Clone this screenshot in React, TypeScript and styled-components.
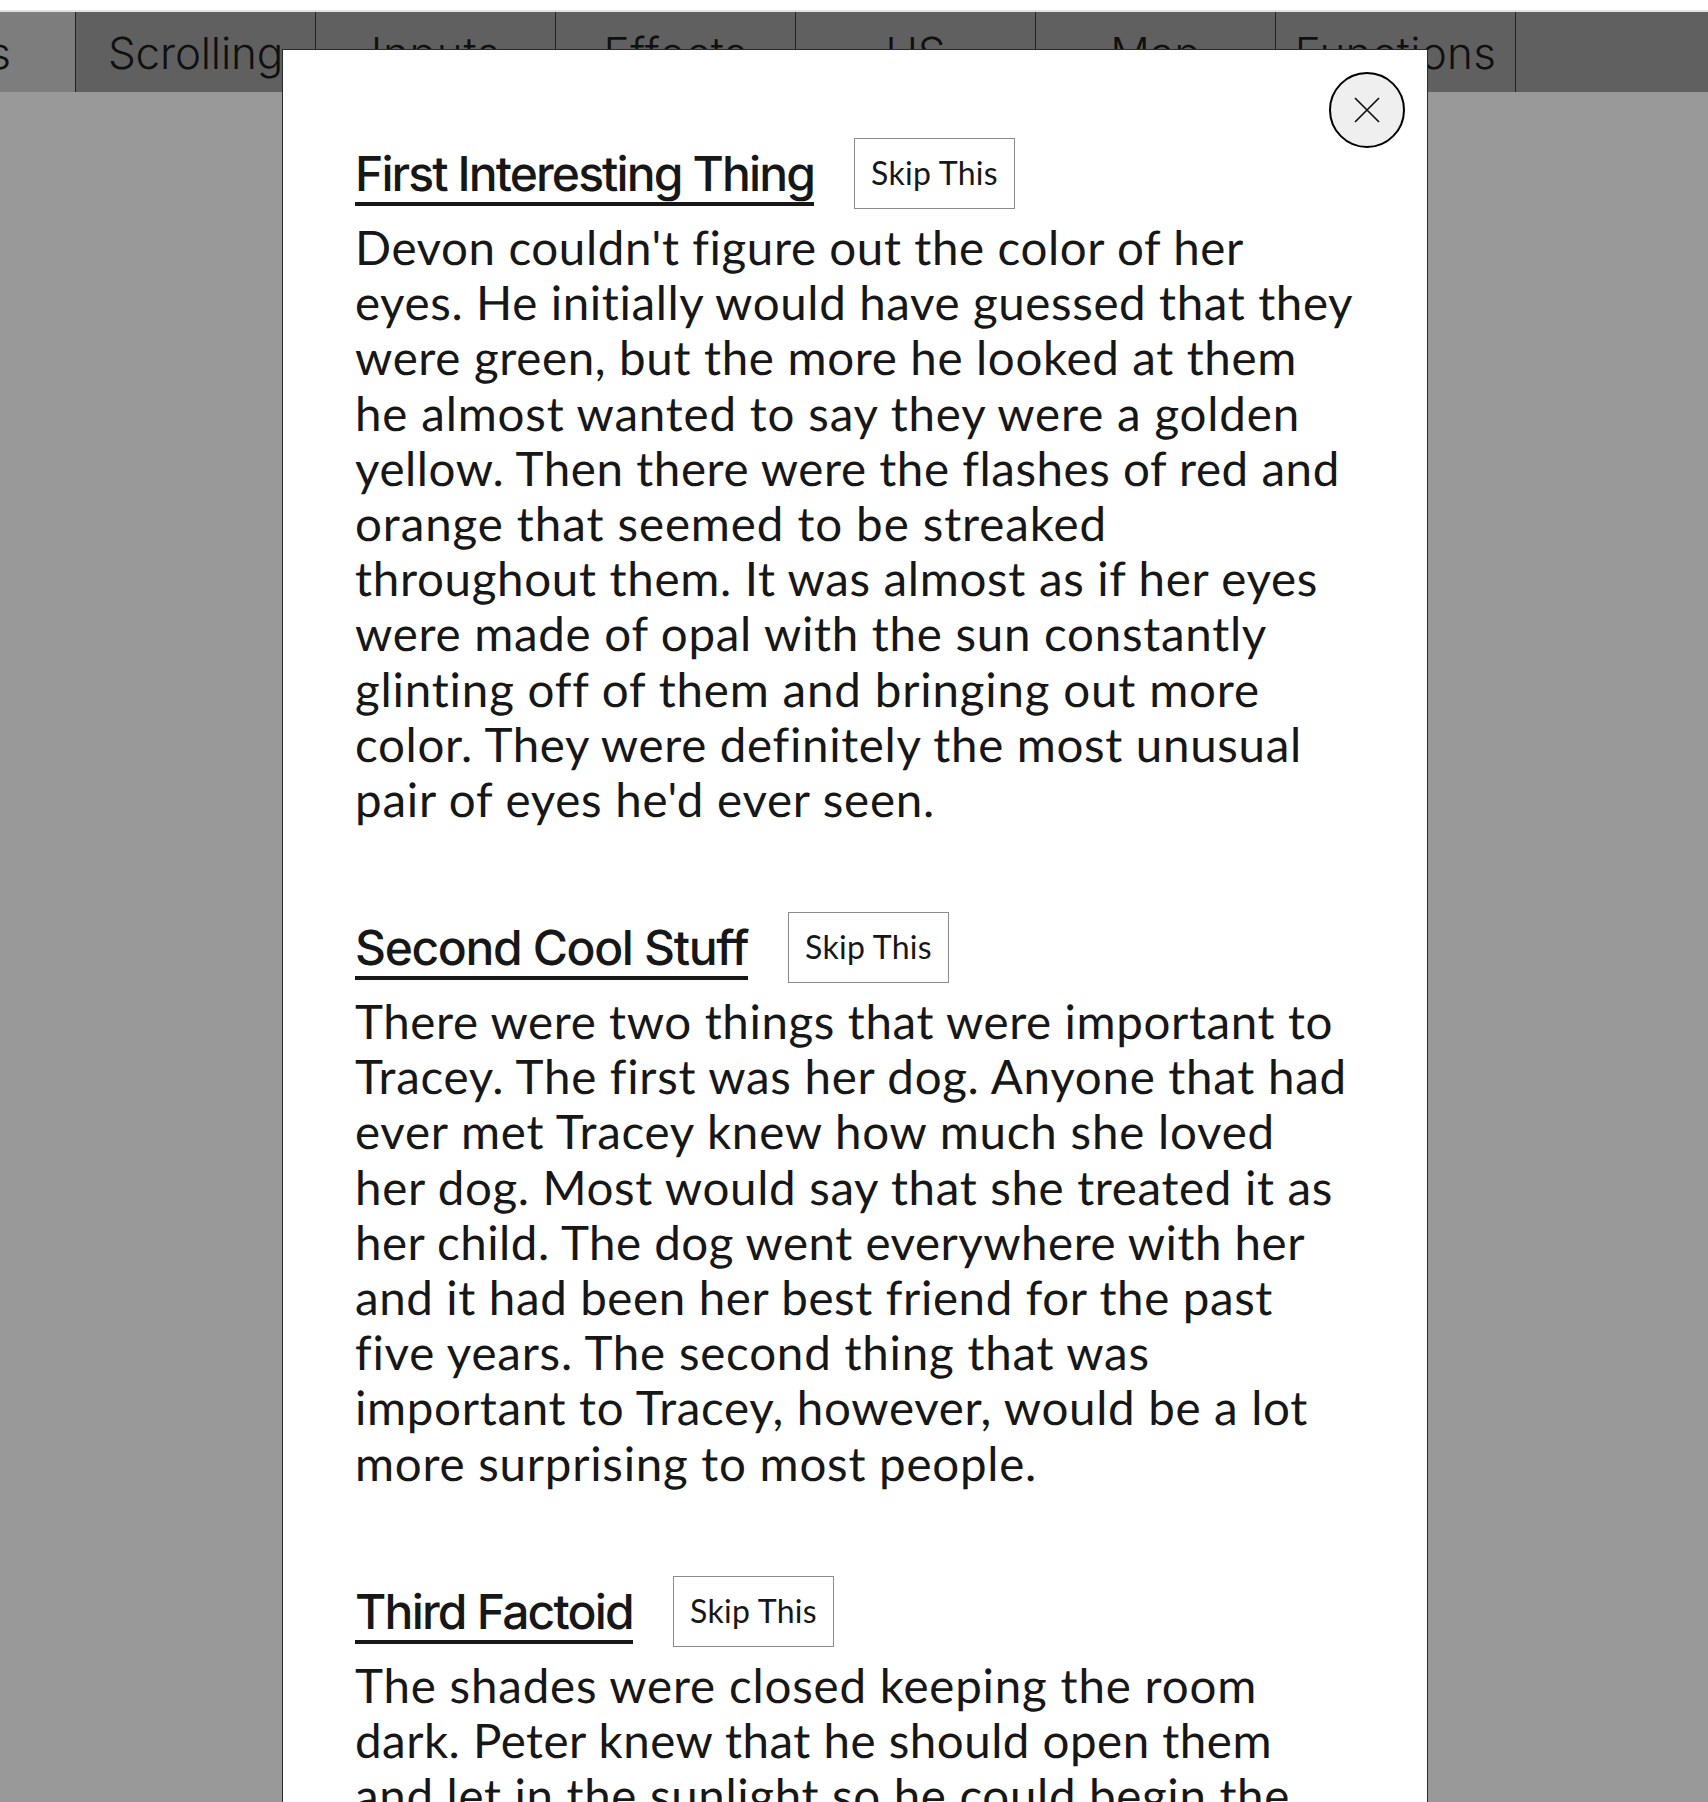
import React, { useLayoutEffect, useRef, useState } from 'react';
import styled, { createGlobalStyle } from 'styled-components';

const GlobalStyle = createGlobalStyle`
  *, *::before, *::after { box-sizing: border-box; }
  html, body { margin: 0; background: #999999; }
  body { height: 1802px; overflow: hidden; font-family: Lato, "Liberation Sans", sans-serif; color: #171717; text-rendering: geometricPrecision; }
`;

const Page = styled.div`
  position: relative;
  height: 1802px;
  overflow: hidden;
  background: #999999;
`;

const BrowserEdge = styled.div`
  height: 12px;
  background: #ffffff;
  border-bottom: 2px solid #e0e1e2;
`;

const TabBar = styled.nav`
  display: flex;
  height: 80px;
  background: #606060;
`;

const Tab = styled.div<{ $width?: number; $active?: boolean; $tracking?: number }>`
  display: flex;
  justify-content: ${p => (p.$active ? 'flex-end' : 'center')};
  flex: none;
  width: ${p => p.$width ?? 240}px;
  padding-right: ${p => (p.$active ? 64 : 0)}px;
  border-right: 1px solid #222222;
  background: ${p => (p.$active ? '#7d7d7d' : 'transparent')};
  color: #101010;
  font: 350 44px/82px Inter, "Liberation Sans", sans-serif;
  letter-spacing: ${p => p.$tracking ?? 0}px;
  white-space: nowrap;
`;

const Dialog = styled.section`
  position: absolute;
  top: 49px;
  left: 282px;
  width: 1146px;
  height: 1800px;
  padding: 88px 72px 0;
  border: 1px solid #2a2a2a;
  background: #ffffff;
`;

const CloseButton = styled.button`
  position: absolute;
  top: 22px;
  right: 22px;
  display: grid;
  place-items: center;
  width: 76px;
  height: 76px;
  padding: 0;
  border: 2px solid #000000;
  border-radius: 50%;
  background: #efefef;
`;

const Article = styled.article`
  margin-bottom: 83px;
`;

const Header = styled.header`
  display: flex;
  align-items: flex-start;
  gap: 40px;
  height: 82px;
`;

const Title = styled.h2`
  height: 68px;
  margin: 0;
  border-bottom: 4px solid #171717;
  font: 550 48px/71px Inter, "Liberation Sans", sans-serif;
`;

const SkipButton = styled.button`
  width: 161px;
  height: 71px;
  padding: 0 0 2px;
  border: 1px solid #8c8c8c;
  background: #ffffff;
  color: #171717;
  font: 400 32px/67px Lato, "Liberation Sans", sans-serif;
`;

const Paragraph = styled.p`
  margin: 0;
  padding-bottom: 2px;
  font-size: 47.5px;
  line-height: 55.2px;
`;

const Row = styled.span`
  display: block;
  height: 55.2px;
  white-space: nowrap;
`;

const Run = styled.span`
  display: inline-block;
  white-space: nowrap;
`;

/* Spreads the letters of a run evenly so that it fills the given measure. */
function Tracked({ text, width }: { text: string; width: number }) {
  const ref = useRef<HTMLSpanElement>(null);
  const [spacing, setSpacing] = useState(0);
  useLayoutEffect(() => {
    const el = ref.current;
    if (!el) return;
    el.style.letterSpacing = '0px';
    const natural = el.getBoundingClientRect().width;
    const next = (width - natural) / text.length;
    el.style.letterSpacing = `${next}px`;
    setSpacing(next);
  }, [text, width]);
  return <Run ref={ref} style={{ letterSpacing: spacing }}>{text}</Run>;
}

type Line = [string, number];

const articles: { title: Line; lines: Line[] }[] = [
  {
    title: ['First Interesting Thing', 459],
    lines: [
      ["Devon couldn't figure out the color of her", 888],
      ['eyes. He initially would have guessed that they', 999],
      ['were green, but the more he looked at them', 942],
      ['he almost wanted to say they were a golden', 945],
      ['yellow. Then there were the flashes of red and', 985],
      ['orange that seemed to be streaked', 752],
      ['throughout them. It was almost as if her eyes', 963],
      ['were made of opal with the sun constantly', 912],
      ['glinting off of them and bringing out more', 904],
      ['color. They were definitely the most unusual', 946],
      ["pair of eyes he'd ever seen.", 580],
    ],
  },
  {
    title: ['Second Cool Stuff', 393],
    lines: [
      ['There were two things that were important to', 978],
      ['Tracey. The first was her dog. Anyone that had', 991],
      ['ever met Tracey knew how much she loved', 920],
      ['her dog. Most would say that she treated it as', 978],
      ['her child. The dog went everywhere with her', 950],
      ['and it had been her best friend for the past', 918],
      ['five years. The second thing that was', 794],
      ['important to Tracey, however, would be a lot', 953],
      ['more surprising to most people.', 682],
    ],
  },
  {
    title: ['Third Factoid', 278],
    lines: [
      ['The shades were closed keeping the room', 902],
      ['dark. Peter knew that he should open them', 917],
      ['and let in the sunlight so he could begin the', 935],
    ],
  },
];

const tabs: [string, number][] = [
  ['Scrolling', -0.2],
  ['Inputs', 0.7],
  ['Effects', 0.6],
  ['US', 0],
  ['Map', 0],
  ['Functions', 0.3],
];

export default function App() {
  return (
    <Page>
      <GlobalStyle />
      <BrowserEdge />
      <TabBar>
        <Tab $active $width={76}>Basics</Tab>
        {tabs.map(([label, tracking]) => <Tab key={label} $tracking={tracking}>{label}</Tab>)}
      </TabBar>
      <Dialog>
        <CloseButton aria-label="Close">
          <svg width="26" height="26" viewBox="0 0 26 26" fill="none" stroke="#111" strokeWidth="1.7">
            <path d="M1 1L25 25M25 1L1 25" />
          </svg>
        </CloseButton>
        {articles.map(a => (
          <Article key={a.title[0]}>
            <Header>
              <Title><Tracked text={a.title[0]} width={a.title[1]} /></Title>
              <SkipButton><Tracked text="Skip This" width={127} /></SkipButton>
            </Header>
            <Paragraph>
              {a.lines.map(([text, width]) => (
                <Row key={text}><Tracked text={text} width={width} /></Row>
              ))}
            </Paragraph>
          </Article>
        ))}
      </Dialog>
    </Page>
  );
}
